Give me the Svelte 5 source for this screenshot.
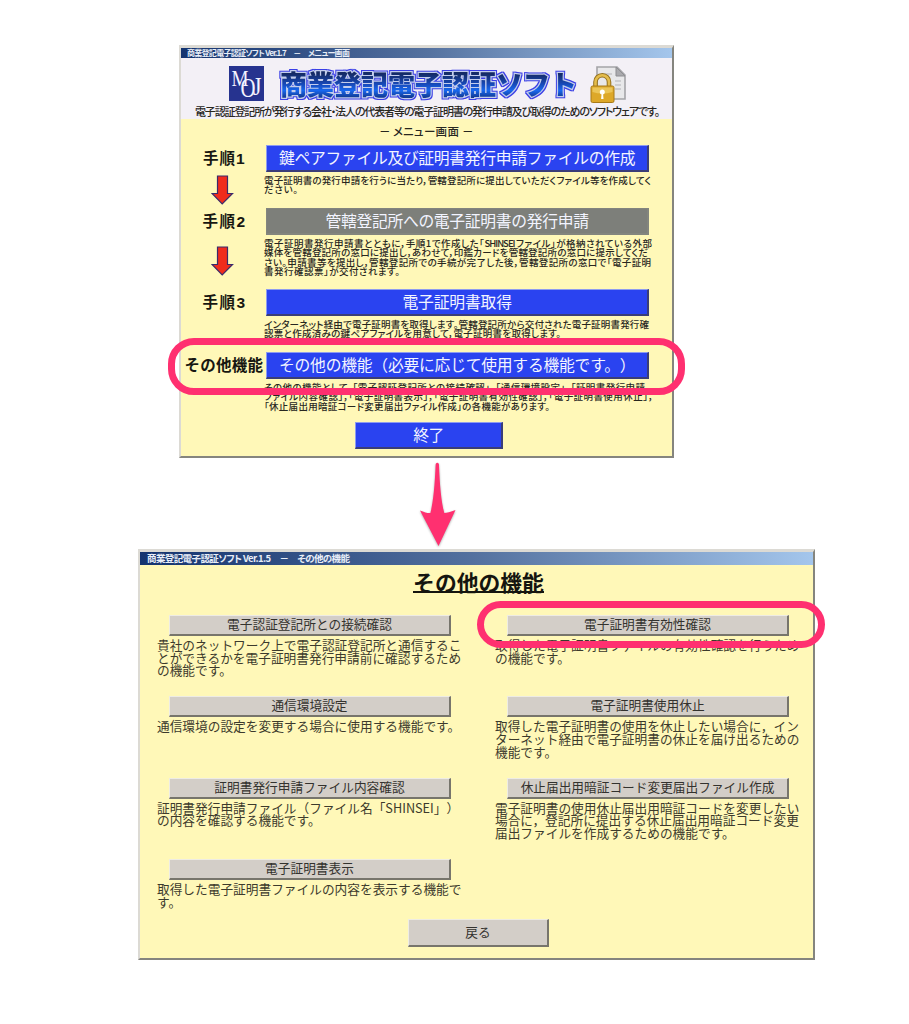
<script>
  const steps = [
    {
      label: '手順1', labelWidth: 41, height: 63, arrow: true,
      title: '鍵ペアファイル及び証明書発行申請ファイルの作成', titleWidth: 356,
      lines: [
        ['電子証明書の発行申請を行うに当たり，管轄登記所に提出していただくファイル等を作成してく', 386],
        ['ださい。', 33]
      ]
    },
    {
      label: '手順2', labelWidth: 42, height: 81, arrow: true, disabled: true,
      title: '管轄登記所への電子証明書の発行申請', titleWidth: 263,
      lines: [
        ['電子証明書発行申請書とともに，手順1で作成した「SHINSEIファイル」が格納されている外部', 387],
        ['媒体を管轄登記所の窓口に提出し，あわせて，印鑑カードを管轄登記所の窓口に提示してくだ', 383],
        ['さい。申請書等を提出し，管轄登記所での手続が完了した後，管轄登記所の窓口で「電子証明', 386],
        ['書発行確認票」が交付されます。', 135]
      ]
    },
    {
      label: '手順3', labelWidth: 42, height: 63,
      title: '電子証明書取得', titleWidth: 109,
      lines: [
        ['インターネット経由で電子証明書を取得します。管轄登記所から交付された電子証明書発行確', 384],
        ['認票と作成済みの鍵ペアファイルを用意して，電子証明書を取得します。', 296]
      ]
    },
    {
      label: 'その他機能', labelWidth: 78, height: 70,
      title: 'その他の機能（必要に応じて使用する機能です。）', titleWidth: 356,
      lines: [
        ['その他の機能として，「電子認証登記所との接続確認」，「通信環境設定」，「証明書発行申請', 380],
        ['ファイル内容確認」，「電子証明書表示」，「電子証明書有効性確認」，「電子証明書使用休止」，', 388],
        ['「休止届出用暗証コード変更届出ファイル作成」の各機能があります。', 285]
      ]
    }
  ];

  const columns = [
    [
      { title: '電子認証登記所との接続確認', lines: ['貴社のネットワーク上で電子認証登記所と通信するこ', 'とができるかを電子証明書発行申請前に確認するため', 'の機能です。'] },
      { title: '通信環境設定', lines: ['通信環境の設定を変更する場合に使用する機能です。'] },
      { title: '証明書発行申請ファイル内容確認', lines: ['証明書発行申請ファイル（ファイル名「SHINSEI」）', 'の内容を確認する機能です。'] },
      { title: '電子証明書表示', lines: ['取得した電子証明書ファイルの内容を表示する機能で', 'す。'] }
    ],
    [
      { title: '電子証明書有効性確認', lines: ['取得した電子証明書ファイルの有効性確認を行うため', 'の機能です。'] },
      { title: '電子証明書使用休止', lines: ['取得した電子証明書の使用を休止したい場合に，イン', 'ターネット経由で電子証明書の休止を届け出るための', '機能です。'] },
      { title: '休止届出用暗証コード変更届出ファイル作成', lines: ['電子証明書の使用休止届出用暗証コードを変更したい', '場合に，登記所に提出する休止届出用暗証コード変更', '届出ファイルを作成するための機能です。'] }
    ]
  ];
</script>

{#snippet fit(text, width)}
  <span class="fit" style="width: {width}px">{text}</span>
{/snippet}

<main>
  <section class="window menu">
    <div class="bar">{@render fit('商業登記電子認証ソフト Ver.1.7　－　メニュー画面', 162)}</div>
    <header>
      <div class="brand">
        <svg class="logo" viewBox="0 0 35 35" width="35" height="35">
          <rect width="35" height="35" fill="#26338f" />
          <g fill="#f4f3ff" font-family="Liberation Serif, serif">
            <text x="2.5" y="20" font-size="24" textLength="17" lengthAdjust="spacingAndGlyphs">M</text>
            <text x="11.5" y="30.5" font-size="27" textLength="15" lengthAdjust="spacingAndGlyphs">O</text>
            <text x="24" y="28.5" font-size="25" textLength="8.5" lengthAdjust="spacingAndGlyphs">J</text>
          </g>
        </svg>
        <svg class="wordmark" viewBox="0 0 306 36" width="306" height="36">
          <defs>
            <linearGradient id="ink" x1="0" y1="0" x2="0" y2="1">
              <stop offset="0.25" stop-color="#152b66" />
              <stop offset="0.5" stop-color="#1747b4" />
              <stop offset="0.68" stop-color="#1767ee" />
              <stop offset="0.85" stop-color="#123b94" />
            </linearGradient>
            <filter id="rim" x="-2%" y="-20%" width="104%" height="140%" color-interpolation-filters="sRGB">
              <feMorphology in="SourceAlpha" operator="dilate" radius="1" result="wide" />
              <feFlood flood-color="#3a3fe6" />
              <feComposite in2="wide" operator="in" result="edge" />
              <feMerge>
                <feMergeNode in="edge" />
                <feMergeNode in="SourceGraphic" />
              </feMerge>
            </filter>
          </defs>
          <text x="5" y="28" textLength="297" fill="url(#ink)" filter="url(#rim)">商業登記電子認証ソフト</text>
        </svg>
        <svg class="lock" viewBox="0 0 37 38" width="37" height="38">
          <path d="M7 1H27L35 9V33H7Z" fill="#e8e8ea" stroke="#a4a4a8" stroke-width="1.6" />
          <path d="M26 1V10H35Z" fill="#aaaaae" stroke="#8e8e92" />
          <path d="M13 8H22M25 15H31M25 19H31M25 23H31" stroke="#c4c4c8" stroke-width="1.3" />
          <path d="M5.5 21V16A6.7 6.7 0 0 1 19 16V21" fill="none" stroke="#94701c" stroke-width="4.6" />
          <path d="M5.5 21V16A6.7 6.7 0 0 1 19 16V21" fill="none" stroke="#e4bd4d" stroke-width="2.6" />
          <rect x="1" y="20" width="23" height="16.5" rx="1.6" fill="#dda829" stroke="#a87a18" />
          <path d="M2.5 21.5H22.5V26Q12 29 2.5 26Z" fill="#ebc558" />
          <circle cx="12.3" cy="26" r="2.5" fill="#fff" />
          <path d="M11.6 27H13L13.5 33H11.1Z" fill="#fff" />
        </svg>
      </div>
      <p>{@render fit('電子認証登記所が発行する会社・法人の代表者等の電子証明書の発行申請及び取得のためのソフトウェアです。', 464)}</p>
    </header>
    <h2>{@render fit('－ メニュー画面 －', 94)}</h2>
    {#each steps as step}
      <div class="step" style="height: {step.height}px">
        <div class="side">
          <strong>{@render fit(step.label, step.labelWidth)}</strong>
          {#if step.arrow}
            <svg class:low={step.disabled} viewBox="0 0 23 30" width="23" height="30">
              <path d="M6.5 1H16.5V18.5H21.5L11.2 28.8L1 18.5H6.5Z" fill="#f02c1c" stroke="#3a2a6a" stroke-width="1.2" />
            </svg>
          {/if}
        </div>
        <div class="content">
          <button class="blue" class:disabled={step.disabled}>{@render fit(step.title, step.titleWidth)}</button>
          <div class="notes">
            {#each step.lines as [text, width]}{@render fit(text, width)}{/each}
          </div>
        </div>
      </div>
    {/each}
    <button class="blue end">終了</button>
    <div class="ring"></div>
  </section>

  <svg class="pointer" viewBox="0 0 40 91" width="40" height="91">
    <path d="M17.7 6Q19.3 3.5 20.9 6C21.8 26 23 43 26.3 55Q30 55 37.5 52L20.5 88L2 52.5Q9 55.5 12.4 55C15.5 43 16.8 26 17.7 6Z" />
  </svg>

  <section class="window functions">
    <div class="bar">{@render fit('商業登記電子認証ソフト Ver.1.5　－　その他の機能', 202)}</div>
    <h1><span>その他の機能</span></h1>
    <div class="columns">
      {#each columns as column}
        <div class="column">
          {#each column as item}
            <div class="item">
              <button class="gray">{item.title}</button>
              <div class="desc">
                {#each item.lines as text}<span>{text}</span>{/each}
              </div>
            </div>
          {/each}
        </div>
      {/each}
    </div>
    <button class="gray back">戻る</button>
    <div class="ring"></div>
  </section>
</main>

<style>
  :global(body) { background: #fff; }
  main {
    box-sizing: border-box;
    width: 909px;
    height: 1024px;
    padding-top: 45px;
    overflow: hidden;
    font-family: 'Noto Sans CJK JP', sans-serif;
    color: #28271f;
    text-spacing-trim: space-all;
  }
  .window {
    position: relative;
    box-sizing: border-box;
    display: flex;
    flex-direction: column;
    background: #fff8b8;
    border: 2px solid #dcdad4;
    border-right-color: #85857e;
    border-bottom-color: #85857e;
  }
  .menu { width: 495px; height: 413px; margin-left: 179px; border-top-width: 3px; }
  .functions { width: 677px; height: 411px; margin-left: 138px; border-top-width: 3px; }
  .fit {
    display: block;
    flex: none;
    white-space: nowrap;
    text-align: justify;
    text-align-last: justify;
  }
  .bar {
    flex: none;
    height: 10px;
    padding-left: 6px;
    background: linear-gradient(90deg, #14336f, #54719f 50%, #a4c6ec);
    color: #e9eef8;
    font-size: 8px;
    font-weight: 700;
    line-height: 10px;
    letter-spacing: -0.9px;
    font-feature-settings: 'palt';
  }
  .functions .bar {
    height: 13px;
    padding-left: 7px;
    font-size: 9.5px;
    line-height: 13px;
    letter-spacing: -0.6px;
  }
  header { flex: none; height: 61px; background: #f3f0f6; }
  .brand { display: flex; height: 46px; padding: 8px 0 0 48px; box-sizing: border-box; }
  .logo { flex: none; }
  .wordmark { flex: none; margin: 1px 0 0 11px; }
  .wordmark text {
    font-size: 27px;
    font-weight: 900;
    stroke: #c3cdec;
    stroke-width: 2.4px;
    paint-order: stroke;
  }
  .lock { flex: none; margin-left: 9px; }
  header p {
    margin: 0 0 0 14px;
    font-size: 11px;
    font-weight: 500;
    line-height: 15px;
    letter-spacing: -1.2px;
    font-feature-settings: 'palt';
  }
  h2 {
    flex: none;
    height: 26px;
    margin: 0 0 0 198px;
    font-size: 11.5px;
    font-weight: 500;
    line-height: 25px;
    letter-spacing: -0.5px;
    font-feature-settings: 'palt';
  }
  .step { flex: none; display: flex; }
  .side { flex: none; width: 85px; display: flex; flex-direction: column; align-items: center; }
  .side strong {
    height: 27px;
    font-family: 'Liberation Sans', 'Noto Sans CJK JP', sans-serif;
    font-size: 15.5px;
    line-height: 27px;
    letter-spacing: -0.5px;
    color: #171711;
  }
  .side svg { margin: 3px 3px 0 0; }
  .side svg.low { margin-top: 11px; }
  .content { flex: none; width: 400px; }
  button {
    box-sizing: border-box;
    display: flex;
    align-items: center;
    justify-content: center;
    padding: 0;
    font-family: inherit;
    white-space: nowrap;
  }
  .blue {
    width: 383px;
    height: 27px;
    background: #2a43f0;
    border: 1px solid #8d9cf0;
    border-right: 2px solid #3a3d78;
    border-bottom: 2px solid #3a3d78;
    color: #f2f4ff;
    font-size: 15.8px;
    line-height: 22px;
    letter-spacing: -0.5px;
  }
  .blue.disabled { background: #7d7f7a; border-color: #83857e; }
  .notes {
    margin: 4.2px 0 0 -2px;
    font-size: 9.5px;
    font-weight: 500;
    line-height: 9.2px;
    letter-spacing: -1px;
    font-feature-settings: 'palt';
  }
  .end { flex: none; width: 148px; margin-left: 174px; }
  .ring { position: absolute; box-sizing: border-box; border: 7px solid #ff3070; }
  .menu .ring { left: -13px; top: 290px; width: 517px; height: 57px; border-radius: 26px; }
  .functions .ring { left: 337px; top: 49px; width: 348px; height: 47px; border-radius: 24px; }
  .pointer { display: block; margin-left: 417.5px; fill: #ff3070; filter: drop-shadow(0 1px 1px #0005); }
  h1 {
    flex: none;
    height: 50px;
    margin: 0 0 0 4px;
    display: flex;
    justify-content: center;
    font-size: 21.8px;
    line-height: 34px;
    color: #15150f;
  }
  h1 span { height: 26px; border-bottom: 2px solid #15150f; }
  .columns { flex: none; display: flex; height: 304px; padding-left: 17px; gap: 33px; }
  .column { width: 305px; }
  .item { height: 81.3px; }
  .gray {
    width: 282px;
    height: 21px;
    margin-left: 12px;
    padding-bottom: 2px;
    background: #d3cec8;
    border: 1px solid #eeece4;
    border-right: 2px solid #77756c;
    border-bottom: 2px solid #77756c;
    color: #33322e;
    font-size: 12.7px;
    line-height: 16px;
  }
  .desc { padding-top: 3px; font-size: 12.7px; line-height: 12.7px; color: #3c3a2c; }
  .desc span { display: block; white-space: nowrap; }
  .back { flex: none; width: 141px; height: 28px; margin-left: 268px; }
</style>
